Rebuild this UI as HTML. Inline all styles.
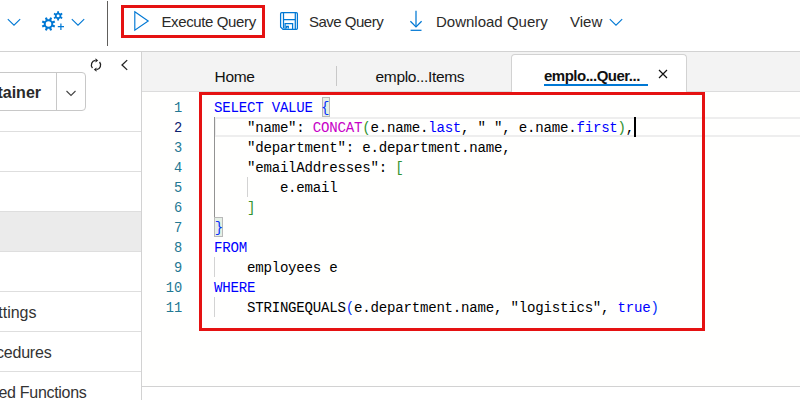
<!DOCTYPE html>
<html lang="en">
<head>
<meta charset="utf-8">
<title>Data Explorer - Query</title>
<style>
*{box-sizing:border-box;margin:0;padding:0}
html,body{width:800px;height:400px;overflow:hidden;background:#fff}
body{position:relative;font-family:"Liberation Sans",sans-serif;color:#201f1e}
.abs{position:absolute}
.t{position:absolute;white-space:nowrap;line-height:20px;font-size:15px;color:#2b2a29}
/* toolbar */
#toolbar{left:0;top:0;width:800px;height:52px;background:#fff;border-bottom:1px solid #d2d2d2}
#vdiv{left:107px;top:1px;width:1px;height:45px;background:#605e5c}
#execbox{left:121px;top:5px;width:144px;height:33px;border:3px solid #e51212}
/* sidebar */
#sidebar{left:0;top:52px;width:142px;height:348px;background:#fff;border-right:1px solid #d2d2d2}
.row{position:absolute;left:0;width:141px;height:40px;border-top:1px solid #dedede}
#contbtn{left:-10px;top:72px;width:96px;height:39px;border:1px solid #c8c8c8;border-radius:0 4px 4px 0;background:#fff}
#contdiv{left:56px;top:73px;width:1px;height:37px;background:#c8c8c8}
/* tabs */
#tabbar{left:142px;top:52px;width:658px;height:40px;background:#f3f3f3;border-bottom:1px solid #dcdcdc}
#tabdiv{left:336px;top:66px;width:1px;height:20px;background:#c8c8c8}
#activetab{left:511px;top:54px;width:176px;height:39px;background:#fff;border:1px solid #d2d2d2;border-bottom:none;border-radius:4px 4px 0 0}
#tabul{left:544px;top:84px;width:104px;height:2px;background:#0078d4}
/* editor */
#editor{left:142px;top:92px;width:658px;height:294px;background:#fffffe}
#redbox{left:199px;top:92px;width:506px;height:239px;border:3px solid #e51212}
#botline{left:142px;top:386px;width:658px;height:1px;background:#d2d2d2}
.ln{position:absolute;left:141.3px;width:41px;text-align:right;font-family:"Liberation Mono",monospace;font-size:13.73px;line-height:20px;color:#237893;height:20px}
.cl{position:absolute;left:214px;white-space:pre;font-family:"Liberation Mono",monospace;font-size:14.1px;letter-spacing:-0.222px;line-height:20px;margin-top:-1px;color:#000;height:20px}
.k{color:#0000ff}.f{color:#c700c7}.b1{color:#0431fa}.b2{color:#319331}
.g{position:absolute;width:1px;background:#d3d3d3}
.ga{background:#939393}
#curline{left:214px;top:117px;width:600px;height:20px;border:2px solid #eeeeee}
#cursor{left:634px;top:117px;width:2px;height:20px;background:#000}
.bm{position:absolute;width:8px;height:20px;background:#e6f0e6;border:1px solid #b9b9b9}
</style>
</head>
<body>
<!-- toolbar -->
<div id="toolbar" class="abs"></div>
<svg class="abs" style="left:6px;top:15.8px" width="16" height="12" viewBox="0 0 16 12"><path d="M1.8 3.2 L8 9.2 L14.2 3.2" fill="none" stroke="#0078d4" stroke-width="1.1"/></svg>
<!-- gears icon -->
<svg class="abs" style="left:40px;top:9px" width="26" height="24" viewBox="0 0 26 24">
 <path fill="#0078d4" fill-rule="evenodd" d="M9.28 10.31 L10.11 8.29 L12.11 9.12 L11.26 11.14 L12.36 12.24 L14.38 11.39 L15.21 13.39 L13.19 14.22 L13.19 15.78 L15.21 16.61 L14.38 18.61 L12.36 17.76 L11.26 18.86 L12.11 20.88 L10.11 21.71 L9.28 19.69 L7.72 19.69 L6.89 21.71 L4.89 20.88 L5.74 18.86 L4.64 17.76 L2.62 18.61 L1.79 16.61 L3.81 15.78 L3.81 14.22 L1.79 13.39 L2.62 11.39 L4.64 12.24 L5.74 11.14 L4.89 9.12 L6.89 8.29 L7.72 10.31Z M5.75 15.00 a2.75 2.75 0 1 0 5.50 0 a2.75 2.75 0 1 0 -5.50 0Z"/>
 <path fill="#0078d4" fill-rule="evenodd" d="M17.16 3.74 L17.20 2.19 L19.00 2.19 L19.04 3.74 L20.37 4.51 L21.73 3.76 L22.63 5.32 L21.31 6.13 L21.31 7.67 L22.63 8.48 L21.73 10.04 L20.37 9.29 L19.04 10.06 L19.00 11.61 L17.20 11.61 L17.16 10.06 L15.83 9.29 L14.47 10.04 L13.57 8.48 L14.89 7.67 L14.89 6.13 L13.57 5.32 L14.47 3.76 L15.83 4.51Z M16.65 6.90 a1.45 1.45 0 1 0 2.90 0 a1.45 1.45 0 1 0 -2.90 0Z"/>
 <path d="M20.9 14.4v6.5M17.8 17.7h6.2" fill="none" stroke="#0078d4" stroke-width="1.2"/>
</svg>
<svg class="abs" style="left:70px;top:15.8px" width="16" height="12" viewBox="0 0 16 12"><path d="M1.8 3.2 L8 9.2 L14.2 3.2" fill="none" stroke="#0078d4" stroke-width="1.1"/></svg>
<div id="vdiv" class="abs"></div>
<div id="execbox" class="abs"></div>
<svg class="abs" style="left:132px;top:9px" width="20" height="24" viewBox="0 0 20 24"><path d="M2.8 2.8 L16.2 12 L2.8 21.2 Z" fill="none" stroke="#0078d4" stroke-width="1.15" stroke-linejoin="miter"/></svg>
<div class="t" id="tx_exec" style="left:161.5px;top:12px;letter-spacing:-0.38px">Execute Query</div>
<!-- save icon -->
<svg class="abs" style="left:279px;top:11px" width="20" height="20" viewBox="0 0 20 20">
 <g fill="none" stroke="#0078d4" stroke-width="1.25">
  <path d="M2.7 1.6 H17.3 Q18.4 1.6 18.4 2.7 V17.3 Q18.4 18.4 17.3 18.4 H4 L1.6 16 V2.7 Q1.6 1.6 2.7 1.6 Z"/>
  <path d="M4.5 1.7 V17.6 M16.3 1.7 V18.3 M4.5 8.5 H16.3"/>
  <path d="M6.1 18.3 V12.7 H13.6 V18.3"/>
  <path d="M7.6 17.6 V15.4 H9.3 V17.6"/>
 </g>
</svg>
<div class="t" id="tx_save" style="left:309px;top:12px;letter-spacing:-0.5px">Save Query</div>
<!-- download icon -->
<svg class="abs" style="left:405.5px;top:10px" width="20" height="22" viewBox="0 0 20 22">
 <g fill="none" stroke="#0078d4" stroke-width="1.25">
  <path d="M10 0.7 V16.5"/><path d="M4.4 11.2 L10 16.9 L15.6 11.2"/><path d="M4.6 20.3 H15.5"/>
 </g>
</svg>
<div class="t" id="tx_down" style="left:436px;top:12px">Download Query</div>
<div class="t" id="tx_view" style="left:570px;top:12px">View</div>
<svg class="abs" style="left:607.5px;top:15.9px" width="16" height="12" viewBox="0 0 16 12"><path d="M1.8 3.2 L8 9.2 L14.2 3.2" fill="none" stroke="#0078d4" stroke-width="1.1"/></svg>

<!-- sidebar -->
<div id="sidebar" class="abs"></div>
<svg class="abs" style="left:87.8px;top:56.6px" width="16" height="16" viewBox="0 0 16 16">
 <g fill="none" stroke="#222" stroke-width="1.3">
  <path d="M4.48 10.96 A4.6 4.6 0 0 1 7.36 3.44"/><path d="M11.52 5.04 A4.6 4.6 0 0 1 8.64 12.56"/>
 </g>
 <path d="M7.5 1.3 L10.2 3.4 L7.5 5.5Z" fill="#222"/><path d="M8.5 10.5 L5.8 12.6 L8.5 14.7Z" fill="#222"/>
</svg>
<svg class="abs" style="left:117.3px;top:57.5px" width="14" height="14" viewBox="0 0 14 14"><path d="M10.2 2.1 L5 7 L10.2 11.9" fill="none" stroke="#222" stroke-width="1.3"/></svg>
<div id="contbtn" class="abs"></div>
<div id="contdiv" class="abs"></div>
<div class="t" id="tx_cont" style="right:759px;top:83px;font-weight:bold;font-size:16px;color:#2a2a2a">Container</div>
<svg class="abs" style="left:64px;top:86.5px" width="14" height="12" viewBox="0 0 14 12"><path d="M2.5 4 L7 8.5 L11.5 4" fill="none" stroke="#444" stroke-width="1.1"/></svg>
<div class="row" style="top:131px"></div>
<div class="row" style="top:171px"></div>
<div class="row" style="top:211px;background:#ebebeb"></div>
<div class="row" style="top:251px"></div>
<div class="row" style="top:291px"></div>
<div class="row" style="top:331px"></div>
<div class="row" style="top:371px"></div>
<div class="t" id="tx_set" style="right:763.5px;top:303px;color:#333;font-size:16px">Settings</div>
<div class="t" id="tx_proc" style="right:748.5px;top:343px;color:#333;font-size:16px;letter-spacing:-0.2px">Stored Procedures</div>
<div class="t" id="tx_udf" style="right:713.5px;top:383px;color:#333;font-size:16px;letter-spacing:-0.3px">User Defined Functions</div>

<!-- tabs -->
<div id="tabbar" class="abs"></div>
<div class="t" id="tx_home" style="left:214.6px;top:67px;font-size:15.5px;letter-spacing:-0.36px;color:#111">Home</div>
<div id="tabdiv" class="abs"></div>
<div class="t" id="tx_items" style="left:375.6px;top:67px;font-size:15.5px;letter-spacing:-0.34px;color:#111">emplo...Items</div>
<div id="activetab" class="abs"></div>
<div class="t" id="tx_quer" style="left:544px;top:66px;letter-spacing:-0.5px;font-weight:bold;color:#111">emplo...Quer...</div>
<div id="tabul" class="abs"></div>
<svg class="abs" style="left:656px;top:66.8px" width="14" height="14" viewBox="0 0 14 14"><path d="M3 3 L11 11 M11 3 L3 11" fill="none" stroke="#111" stroke-width="1.2"/></svg>

<!-- editor -->
<div id="editor" class="abs"></div>
<div id="botline" class="abs"></div>
<div id="curline" class="abs"></div>
<div class="ln" style="top:99px">1</div>
<div class="ln" style="top:119px;color:#0b216f">2</div>
<div class="ln" style="top:139px">3</div>
<div class="ln" style="top:159px">4</div>
<div class="ln" style="top:179px">5</div>
<div class="ln" style="top:199px">6</div>
<div class="ln" style="top:219px">7</div>
<div class="ln" style="top:239px">8</div>
<div class="ln" style="top:259px">9</div>
<div class="ln" style="top:279px">10</div>
<div class="ln" style="top:299px">11</div>
<div class="bm" style="left:322px;top:97px"></div>
<div class="bm" style="left:214px;top:217px;width:9px"></div>
<!-- indent guides -->
<div class="g ga" style="left:214px;top:117px;height:100px"></div>
<div class="g" style="left:247px;top:177px;height:20px"></div>
<div class="g" style="left:214px;top:257px;height:20px"></div>
<div class="g" style="left:214px;top:297px;height:20px"></div>
<div class="cl" style="top:99px"><span class="k">SELECT VALUE</span> <span class="b1">{</span></div>
<div class="cl" style="top:119px">    "name": <span class="f">CONCAT</span><span class="b2">(</span>e.name.<span class="k">last</span>, " ", e.name.<span class="k">first</span><span class="b2">)</span>,</div>
<div class="cl" style="top:139px">    "department": e.department.name,</div>
<div class="cl" style="top:159px">    "emailAddresses": <span class="b2">[</span></div>
<div class="cl" style="top:179px">        e.email</div>
<div class="cl" style="top:199px">    <span class="b2">]</span></div>
<div class="cl" style="top:219px;left:214.8px"><span class="b1">}</span></div>
<div class="cl" style="top:239px"><span class="k">FROM</span></div>
<div class="cl" style="top:259px">    employees e</div>
<div class="cl" style="top:279px"><span class="k">WHERE</span></div>
<div class="cl" style="top:299px">    STRINGEQUALS<span class="b1">(</span>e.department.name, "logistics", <span class="k">true</span><span class="b1">)</span></div>
<div id="cursor" class="abs"></div>
<div id="redbox" class="abs"></div>
</body>
</html>
